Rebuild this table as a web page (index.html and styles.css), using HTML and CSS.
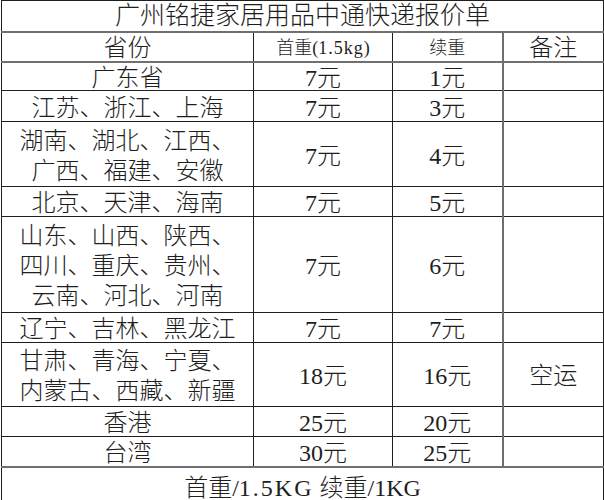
FILE: index.html
```html
<!DOCTYPE html>
<html lang="zh-CN">
<head>
<meta charset="utf-8">
<title>广州铭捷家居用品中通快递报价单</title>
<link rel="stylesheet" href="styles.css">
</head>
<body>
<table class="price">
  <colgroup>
    <col class="c1"><col class="c2"><col class="c3"><col class="c4">
  </colgroup>
  <tr class="title"><td colspan="4">广州铭捷家居用品中通快递报价单</td></tr>
  <tr class="head">
    <td>省份</td>
    <td class="small">首重(<span class="asc">1.5kg</span>)</td>
    <td class="small">续重</td>
    <td class="note">备注</td>
  </tr>
  <tr class="h29"><td>广东省</td><td>7元</td><td>1元</td><td class="note"></td></tr>
  <tr class="h31"><td>江苏、浙江、上海</td><td>7元</td><td>3元</td><td class="note"></td></tr>
  <tr class="h65 multi"><td>湖南、湖北、江西、<br>广西、福建、安徽</td><td>7元</td><td>4元</td><td class="note"></td></tr>
  <tr class="h30"><td>北京、天津、海南</td><td>7元</td><td>5元</td><td class="note"></td></tr>
  <tr class="h96 multi"><td>山东、山西、陕西、<br>四川、重庆、贵州、<br>云南、河北、河南</td><td>7元</td><td>6元</td><td class="note"></td></tr>
  <tr class="h30"><td>辽宁、吉林、黑龙江</td><td>7元</td><td>7元</td><td class="note"></td></tr>
  <tr class="h64 multi"><td>甘肃、青海、宁夏、<br>内蒙古、西藏、新疆</td><td>18元</td><td>16元</td><td class="note">空运</td></tr>
  <tr class="h30"><td>香港</td><td>25元</td><td>20元</td><td class="note"></td></tr>
  <tr class="h30 last"><td>台湾</td><td>30元</td><td>25元</td><td class="note"></td></tr>
  <tr class="foot"><td colspan="4">首重/<span class="asc">1.5KG</span> 续重/1KG</td></tr>
</table>
</body>
</html>
```
FILE: styles.css
```css
html, body {
  margin: 0;
  padding: 0;
  background: #ffffff;
  overflow: hidden;
}

.price {
  margin-left: 1px;
  border-collapse: collapse;
  table-layout: fixed;
  width: 602px;
  font-family: "Liberation Serif", "Noto Sans CJK SC", serif;
  font-weight: 300;
  font-size: 24px;
  color: #1e1e1e;
}

.c1 { width: 252px; }
.c2 { width: 139px; }
.c3 { width: 110px; }
.c4 { width: 101px; }

.price td {
  border: 1px solid #1e1e1e;
  padding: 3px 0 0 0;
  text-align: center;
  vertical-align: middle;
  line-height: 24px;
  white-space: nowrap;
}

.price td.note {
  border-left: 2px solid #6e6e6e;
}

.title { height: 31px; }
.title td {
  font-size: 25px;
  padding-top: 1px;
  border-bottom: 2px solid #707070;
}

.head { height: 30px; }
.head td {
  border-bottom: 2px solid #707070;
}

.head td.small {
  font-size: 18px;
}

.asc {
  letter-spacing: 1px;
}

.h29 { height: 29px; }
.h30 { height: 30px; }
.h31 { height: 31px; }
.h64 { height: 64px; }
.h65 { height: 65px; }
.h96 { height: 96px; }

.multi td {
  line-height: 30px;
}

.last td {
  border-bottom: 2px solid #707070;
}

.foot { height: 40px; }
.foot td {
  vertical-align: top;
  padding-top: 8px;
  line-height: 24px;
}

.foot .asc {
  letter-spacing: 2px;
}
```
